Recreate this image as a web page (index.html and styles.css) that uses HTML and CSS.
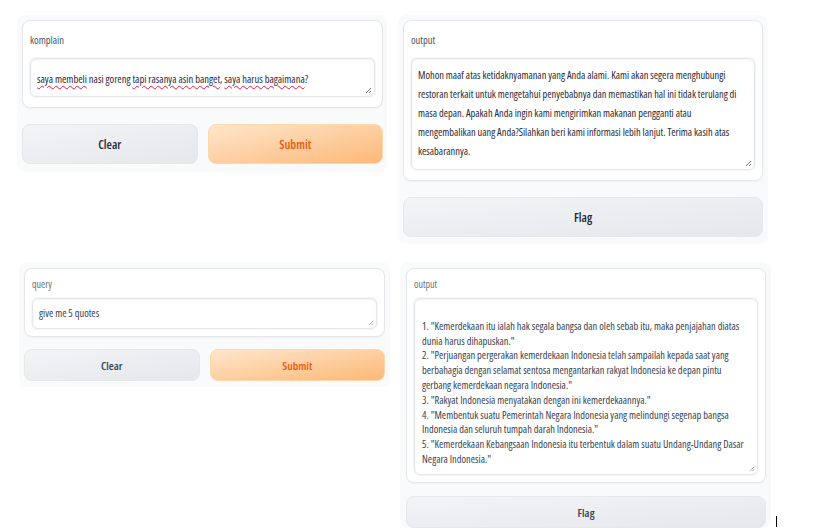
FILE: index.html
```html
<!DOCTYPE html>
<html lang="id">
<head>
<meta charset="utf-8">
<title>Gradio</title>
<link rel="stylesheet" href="styles.css">
</head>
<body>
<main class="page">
  <section class="row row-a">
    <div class="panel panel-a-left">
      <div class="card">
        <div class="label">komplain</div>
        <div class="box box-a-in">
          <span class="typo">saya membeli</span> nasi goreng <span class="typo">tapi rasanya asin banget</span>, <span class="typo">saya harus bagaimana</span>?
          <svg class="grip" viewBox="0 0 8 8" width="8" height="8"><path d="M7 2 L2 7 M7 5 L5 7" stroke="#6b7280" stroke-width="1" fill="none"/></svg>
        </div>
      </div>
      <div class="btns">
        <button class="btn btn-gray">Clear</button>
        <button class="btn btn-orange">Submit</button>
      </div>
    </div>
    <div class="panel panel-a-right">
      <div class="card">
        <div class="label">output</div>
        <div class="box box-a-out">
          Mohon maaf atas ketidaknyamanan yang Anda alami. Kami akan segera menghubungi<br>
          restoran terkait untuk mengetahui penyebabnya dan memastikan hal ini tidak terulang di<br>
          masa depan. Apakah Anda ingin kami mengirimkan makanan pengganti atau<br>
          mengembalikan uang Anda?Silahkan beri kami informasi lebih lanjut. Terima kasih atas<br>
          kesabarannya.
          <svg class="grip" viewBox="0 0 8 8" width="8" height="8"><path d="M7 2 L2 7 M7 5 L5 7" stroke="#6b7280" stroke-width="1" fill="none"/></svg>
        </div>
      </div>
      <button class="btn btn-gray btn-flag">Flag</button>
    </div>
  </section>

  <section class="row row-b">
    <div class="panel panel-b-left">
      <div class="card">
        <div class="label">query</div>
        <div class="box box-b-in">
          give me 5 quotes
          <svg class="grip" viewBox="0 0 8 8" width="7" height="7"><path d="M7 2 L2 7 M7 5 L5 7" stroke="#9ca3af" stroke-width="1" fill="none"/></svg>
        </div>
      </div>
      <div class="btns">
        <button class="btn btn-gray">Clear</button>
        <button class="btn btn-orange">Submit</button>
      </div>
    </div>
    <div class="panel panel-b-right">
      <div class="card">
        <div class="label">output</div>
        <div class="box box-b-out">
          <br>
          1. "Kemerdekaan itu ialah hak segala bangsa dan oleh sebab itu, maka penjajahan diatas<br>
          dunia harus dihapuskan."<br>
          2. "Perjuangan pergerakan kemerdekaan Indonesia telah sampailah kepada saat yang<br>
          berbahagia dengan selamat sentosa mengantarkan rakyat Indonesia ke depan pintu<br>
          gerbang kemerdekaan negara Indonesia."<br>
          3. "Rakyat Indonesia menyatakan dengan ini kemerdekaannya."<br>
          4. "Membentuk suatu Pemerintah Negara Indonesia yang melindungi segenap bangsa<br>
          Indonesia dan seluruh tumpah darah Indonesia."<br>
          5. "Kemerdekaan Kebangsaan Indonesia itu terbentuk dalam suatu Undang-Undang Dasar<br>
          Negara Indonesia."
          <svg class="grip" viewBox="0 0 8 8" width="7" height="7"><path d="M7 2 L2 7 M7 5 L5 7" stroke="#9ca3af" stroke-width="1" fill="none"/></svg>
        </div>
      </div>
      <button class="btn btn-gray btn-flag btn-flag-b">Flag</button>
    </div>
  </section>
  <span class="caret"></span>
</main>
</body>
</html>
```
FILE: styles.css
```css
html, body {
  margin: 0;
  padding: 0;
  background: #ffffff;
}
body {
  font-family: "Open Sans", "Source Sans 3", sans-serif;
  font-stretch: 75%;
  color: #1f2937;
  width: 818px;
  height: 528px;
  overflow: hidden;
}
.page {
  position: relative;
  width: 818px;
  height: 528px;
}
.row {
  display: grid;
  align-items: start;
}
.row-a {
  grid-template-columns: 370px 370px;
  column-gap: 11px;
  padding: 15px 0 0 17px;
}
.row-b {
  grid-template-columns: 371px 371px;
  column-gap: 10px;
  padding: 18px 0 0 19px;
}
.panel {
  background: #f9fafb;
  border-radius: 8px;
  display: flex;
  flex-direction: column;
}
.card {
  background: #ffffff;
  border: 1px solid #e5e7eb;
  border-radius: 8px;
  box-shadow: 0 1px 2px rgba(0,0,0,0.04);
}
.label {
  color: #4b5563;
}
.box {
  position: relative;
  background: #ffffff;
  border: 1px solid #e5e7eb;
  border-radius: 6px;
  box-shadow: inset 0 1px 2px rgba(0,0,0,0.05), 0 0 0 1px rgba(229,231,235,0.4);
  color: #1f2937;
  white-space: nowrap;
}
.grip {
  position: absolute;
  right: 2px;
  bottom: 2px;
}
.typo {
  text-decoration: underline wavy #e11d48;
  text-decoration-thickness: 1px;
  text-underline-offset: 2px;
}
.btns {
  display: grid;
  grid-template-columns: 1fr 1fr;
  column-gap: 10px;
}
.btn {
  font-family: inherit;
  font-stretch: 75%;
  font-weight: 650;
  border-radius: 8px;
  padding: 0;
  cursor: pointer;
}
.btn-gray {
  background: linear-gradient(to bottom right, #f3f4f6, #e5e7eb);
  border: 1px solid #e5e7eb;
  color: #1f2937;
}
.btn-orange {
  background: linear-gradient(to bottom right, #fee6cc, #fdb877);
  border: 1px solid #fed7aa;
  color: #ea580c;
}

/* row A (larger scale) */
.panel-a-left {
  padding: 5px 4px 8px 5px;
}
.panel-a-right {
  padding: 5px 5px 7px 5px;
}
.row-a .card {
  padding: 12px 7px 10px 7px;
}
.row-a .label {
  font-size: 10.5px;
  line-height: 14px;
  margin-bottom: 11px;
}
.box-a-in {
  height: 39px;
  box-sizing: border-box;
  padding: 12px 6px 0 6px;
  font-size: 10.5px;
  font-weight: 500;
  line-height: 16px;
}
.box-a-out {
  height: 112px;
  box-sizing: border-box;
  padding: 7px 6px 0 6px;
  font-size: 10.4px;
  font-weight: 500;
  line-height: 19px;
}
.row-a .btns {
  margin-top: 16px;
}
.row-a .btn {
  height: 40px;
  font-size: 12.3px;
}
.btn-flag {
  margin-top: 16px;
  height: 40px;
  font-size: 12.3px;
}

/* row B (smaller scale) */
.panel-b-left {
  padding: 6px 5px 6px 5px;
}
.panel-b-right {
  padding: 6px 5px 0 6px;
}
.row-b .card {
  padding: 9px 7px 7px 7px;
}
.row-b .label {
  font-size: 10px;
  line-height: 12px;
  margin-bottom: 8px;
  color: #6b7280;
}
.box-b-in {
  height: 31px;
  box-sizing: border-box;
  padding: 7px 6px 0 6px;
  font-size: 10.4px;
  line-height: 14px;
  color: #374151;
}
.box-b-out {
  height: 177px;
  box-sizing: border-box;
  padding: 5px 7px 0 7px;
  font-size: 10.4px;
  line-height: 14.8px;
  color: #374151;
}
.row-b .btns {
  margin-top: 12px;
}
.row-b .btn {
  height: 32px;
  font-size: 11.5px;
  color: #374151;
}
.row-b .btn-orange {
  color: #ea580c;
}
.btn-flag-b {
  margin-top: 13px;
  height: 32px;
  font-size: 11.5px;
}
.caret {
  position: absolute;
  left: 776px;
  top: 516px;
  width: 1px;
  height: 11px;
  background: #000;
}
```
